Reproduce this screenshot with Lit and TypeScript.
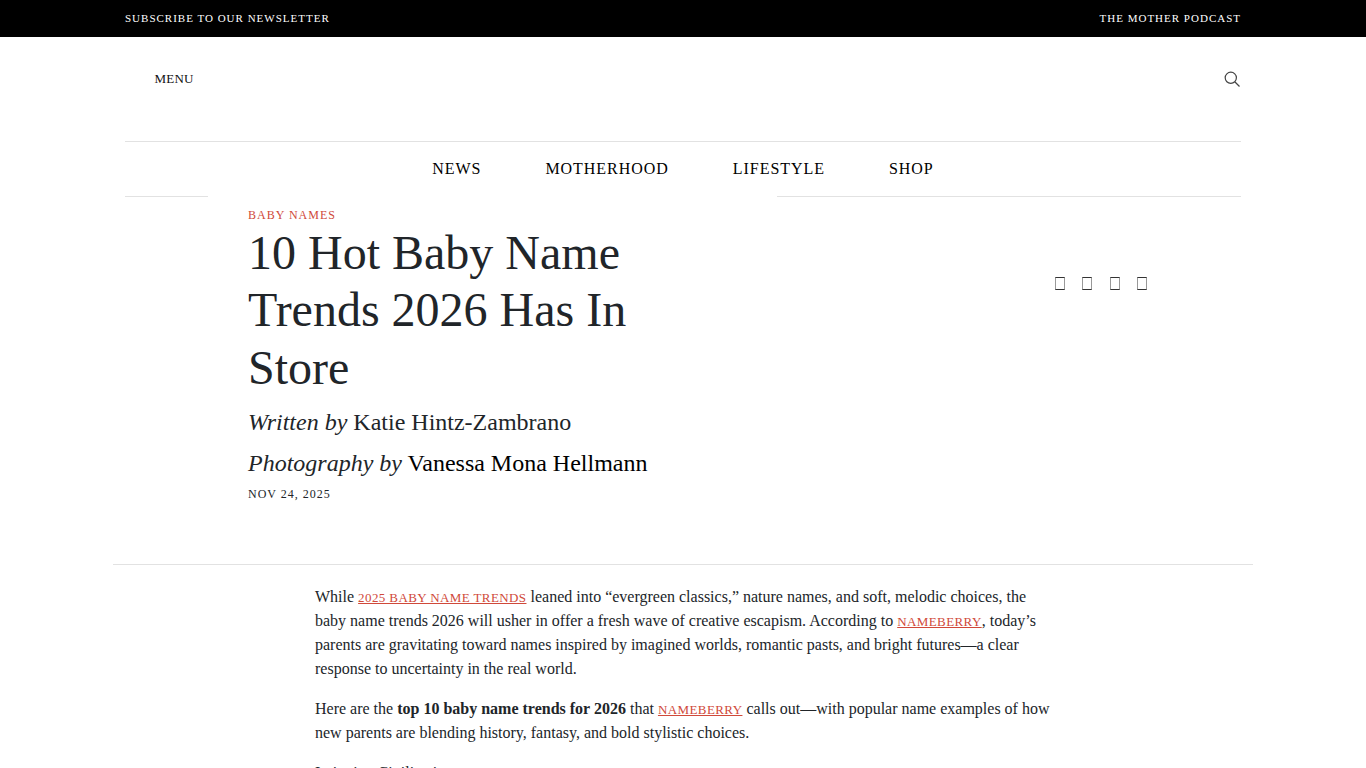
import { LitElement, html, css } from 'lit';
import { customElement } from 'lit/decorators.js';

@customElement('app-root')
export class AppRoot extends LitElement {
    static styles = css`
        :host {
            display: block;
            height: 768px;
            overflow: hidden;
            background: #fff;
            color: #212529;
            font-family: 'Liberation Serif', 'Times New Roman', serif;
        }

        a {
            color: inherit;
            text-decoration: none;
        }

        .promo {
            height: 37px;
            background: #000;
        }

        .promo-inner {
            width: 1116px;
            height: 35px;
            margin: 0 auto;
            display: flex;
            align-items: center;
            justify-content: space-between;
            color: #fff;
            font-size: 11px;
            letter-spacing: 1px;
        }

        .masthead {
            width: 1116px;
            height: 104px;
            margin: 0 auto;
            padding: 0 1px 20px 29.5px;
            box-sizing: border-box;
            display: flex;
            align-items: center;
            justify-content: space-between;
            font-size: 13px;
            letter-spacing: 0.2px;
            color: #111;
        }

        .search {
            display: block;
            width: 16px;
            height: 16px;
        }

        .nav {
            width: 1116px;
            height: 55px;
            margin: 0 auto;
            border-top: 1px solid #e2e2e2;
            box-sizing: border-box;
            display: flex;
            align-items: center;
            justify-content: center;
            gap: 64px;
            font-size: 16px;
            letter-spacing: 0.96px;
            color: #000;
        }

        .rule {
            width: 1116px;
            height: 1px;
            margin: 0 auto;
            display: flex;
            justify-content: space-between;
        }

        .rule i {
            display: block;
            background: #e2e2e2;
        }

        .rule i:first-child {
            width: 83px;
        }

        .rule i:last-child {
            width: 464px;
        }

        .hero {
            width: 1116px;
            height: 367px;
            margin: 0 auto;
            padding: 11px 0 0 123px;
            box-sizing: border-box;
            position: relative;
        }

        .kicker {
            color: #d0493a;
            font-size: 12px;
            letter-spacing: 1px;
            line-height: 14px;
        }

        h1 {
            width: 440px;
            margin: 1.6px 0 0;
            font-size: 48px;
            font-weight: 400;
            line-height: 57.6px;
        }

        .bylines {
            margin-top: 6px;
        }

        .byline {
            font-size: 24px;
            line-height: 41px;
        }

        .byline em {
            font-style: italic;
        }

        .photo a {
            color: #000;
        }

        .date {
            margin-top: 3px;
            font-size: 12px;
            line-height: 14px;
            letter-spacing: 1px;
        }

        .share {
            position: absolute;
            top: 80px;
            left: 930px;
            display: flex;
            gap: 17.3px;
        }

        .share span {
            display: block;
            width: 10px;
            height: 13px;
            border: 1px solid #333;
            border-left-color: #999;
            border-right-color: #999;
            box-sizing: border-box;
        }

        .divider {
            width: 1140px;
            height: 1px;
            margin: 0 auto;
            background: #e2e2e2;
        }

        .body {
            width: 736px;
            margin: 20px 0 0 315px;
            font-size: 16px;
            line-height: 24px;
        }

        .body p {
            margin: 0 0 16px;
        }

        .body a {
            color: #d0493a;
            font-size: 13px;
            line-height: 1;
            letter-spacing: 0.4px;
            text-decoration: underline;
        }
    `;

    render() {
        return html`
            <div class="promo">
                <div class="promo-inner">
                    <a href="#">SUBSCRIBE TO OUR NEWSLETTER</a>
                    <a href="#">THE MOTHER PODCAST</a>
                </div>
            </div>
            <header class="masthead">
                <span>MENU</span>
                <svg class="search" viewBox="0 0 16 16" fill="none" stroke="#444" stroke-width="1.2">
                    <circle cx="6.8" cy="6.8" r="5.6"></circle>
                    <path d="M11 11l4.5 4.5"></path>
                </svg>
            </header>
            <nav class="nav">
                <a href="#">NEWS</a>
                <a href="#">MOTHERHOOD</a>
                <a href="#">LIFESTYLE</a>
                <a href="#">SHOP</a>
            </nav>
            <div class="rule"><i></i><i></i></div>
            <section class="hero">
                <div class="kicker">BABY NAMES</div>
                <h1>10 Hot Baby Name Trends 2026 Has In Store</h1>
                <div class="bylines">
                    <div class="byline"><em>Written by</em> <a href="#">Katie Hintz-Zambrano</a></div>
                    <div class="byline photo"><em>Photography by</em> <a href="#">Vanessa Mona Hellmann</a></div>
                </div>
                <div class="date">NOV 24, 2025</div>
                <div class="share"><span></span><span></span><span></span><span></span></div>
            </section>
            <div class="divider"></div>
            <article class="body">
                <p>While <a href="#">2025 BABY NAME TRENDS</a> leaned into “evergreen classics,” nature names, and soft, melodic choices, the baby name trends 2026 will usher in offer a fresh wave of creative escapism. According to <a href="#">NAMEBERRY</a>, today’s parents are gravitating toward names inspired by imagined worlds, romantic pasts, and bright futures—a clear response to uncertainty in the real world.</p>
                <p>Here are the <strong>top 10 baby name trends for 2026</strong> that <a href="#">NAMEBERRY</a> calls out—with popular name examples of how new parents are blending history, fantasy, and bold stylistic choices.</p>
                <p>Imitation Civilization</p>
            </article>
        `;
    }
}
